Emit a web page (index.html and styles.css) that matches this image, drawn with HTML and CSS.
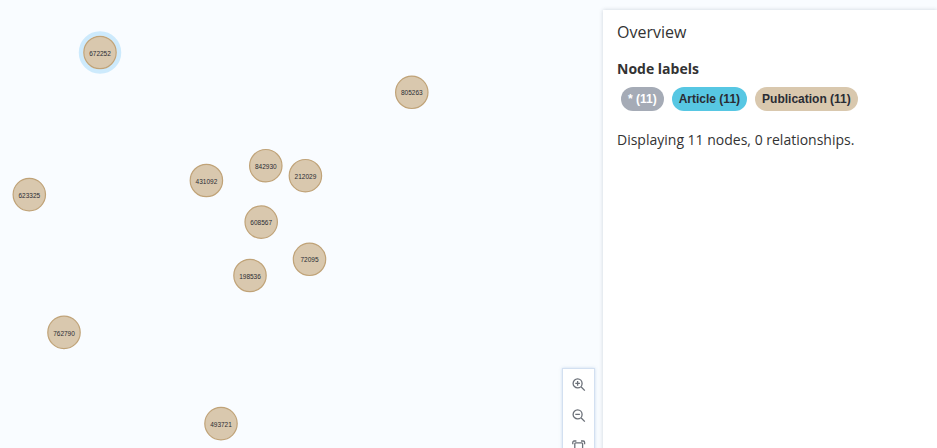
FILE: index.html
```
<!DOCTYPE html>
<html lang="en">
<head>
<meta charset="utf-8">
<title>Graph overview</title>
<link rel="stylesheet" href="styles.css">
</head>
<body>
<main class="frame">
  <section class="canvas">
    <svg class="graph" width="603" height="448" viewBox="0 0 603 448">
      <g transform="translate(100 52.5)"><circle class="halo" r="19"/><circle class="node" r="16.2"/><text y="3.2">672252</text></g>
      <g transform="translate(411.8 92.3)"><circle class="node" r="16.2"/><text y="2.5">805263</text></g>
      <g transform="translate(206.4 180.5)"><circle class="node" r="16.2"/><text y="3.2">431092</text></g>
      <g transform="translate(265.8 165.7)"><circle class="node" r="16.2"/><text y="3.2">842930</text></g>
      <g transform="translate(305.4 175.7)"><circle class="node" r="16.2"/><text y="3.2">212029</text></g>
      <g transform="translate(29.3 194.6)"><circle class="node" r="16.2"/><text y="3.2">623325</text></g>
      <g transform="translate(261.2 222.1)"><circle class="node" r="16.2"/><text y="3.2">608567</text></g>
      <g transform="translate(309.5 259.3)"><circle class="node" r="16.2"/><text y="2.5">72095</text></g>
      <g transform="translate(250 275.5)"><circle class="node" r="16.2"/><text y="3.2">198536</text></g>
      <g transform="translate(64 332.4)"><circle class="node" r="16.2"/><text y="3.2">762790</text></g>
      <g transform="translate(221 423.6)"><circle class="node" r="16.2"/><text y="3.2">493721</text></g>
    </svg>
    <div class="zoom">
      <button class="tool" aria-label="Zoom in"><svg width="14" height="14" viewBox="0 0 14 14"><circle cx="5.6" cy="5.4" r="4.5"/><path d="M9 8.8 12.8 12.6M3.3 5.4h4.6M5.6 3.1v4.6"/></svg></button>
      <button class="tool" aria-label="Zoom out"><svg width="14" height="14" viewBox="0 0 14 14"><circle cx="5.6" cy="5.4" r="4.5"/><path d="M9 8.8 12.8 12.6M3.3 5.4h4.6"/></svg></button>
      <button class="tool" aria-label="Zoom to fit"><svg width="14" height="14" viewBox="0 0 14 14"><rect x="2.8" y="2.8" width="7.8" height="8.4" rx="1"/><path d="M.8 4.2V2.4Q.8 1 2.2 1H4.4M9 1H11.2Q12.6 1 12.6 2.4V4.2M.8 10v1.6q0 1.4 1.4 1.4h2.2M9 13h2.2q1.4 0 1.4-1.4V10"/></svg></button>
    </div>
  </section>
  <aside class="panel">
    <h1 class="title">Overview</h1>
    <h2 class="subtitle">Node labels</h2>
    <div class="labels">
      <span class="chip chip-all">* (11)</span>
      <span class="chip chip-article">Article (11)</span>
      <span class="chip chip-publication">Publication (11)</span>
    </div>
    <p class="summary">Displaying 11 nodes, 0 relationships.</p>
  </aside>
</main>
</body>
</html>
```
FILE: styles.css
```
* { box-sizing: border-box; }
body { margin: 0; background: #f9fcff; color: #333; font-family: "Open Sans", sans-serif; }
.frame { display: flex; height: 448px; overflow: hidden; }
.canvas { position: relative; flex: 0 0 603px; }
.graph { display: block; }
.node { fill: #d9c8ae; stroke: #c0a378; stroke-width: 1.2; }
.halo { fill: none; stroke: #cdeafc; stroke-width: 4.5; }
.graph text { fill: #2a2c34; font: 6.5px "Liberation Sans", sans-serif; text-anchor: middle; }
.zoom {
  position: absolute; left: 562px; top: 368px; width: 33px; height: 100px;
  background: #fff; border: 1px solid #d3e0f1;
  box-shadow: 0 0 3px rgba(120, 160, 210, .35);
}
.tool { display: flex; align-items: center; justify-content: center; width: 31px; height: 31px; margin: 0; padding: 0; border: 0; background: none; }
.tool svg { fill: none; stroke: #6b7078; stroke-width: 1.3; }
.panel { flex: 1; height: 460px; margin-top: 10px; padding: 11px 14px; background: #fff; box-shadow: 0 0 4px rgba(50, 70, 90, .22); }
.title { margin: 0; font-size: 16px; line-height: 22px; font-weight: 400; }
.subtitle { margin: 16px 0 0; font-size: 14px; line-height: 20px; font-weight: 700; }
.labels { display: flex; gap: 8px; margin: 8px 0 0 4px; }
.chip { height: 24px; padding: 0 7px; border-radius: 12px; font: 700 12px/24px "Liberation Sans", sans-serif; white-space: nowrap; }
.chip-all { background: #a5abb6; color: #fff; }
.chip-article { background: #57c7e3; color: #2a2c34; }
.chip-publication { background: #d9c8ae; color: #2a2c34; }
.summary { margin: 19px 0 0; font-size: 14px; line-height: 20px; }
```
